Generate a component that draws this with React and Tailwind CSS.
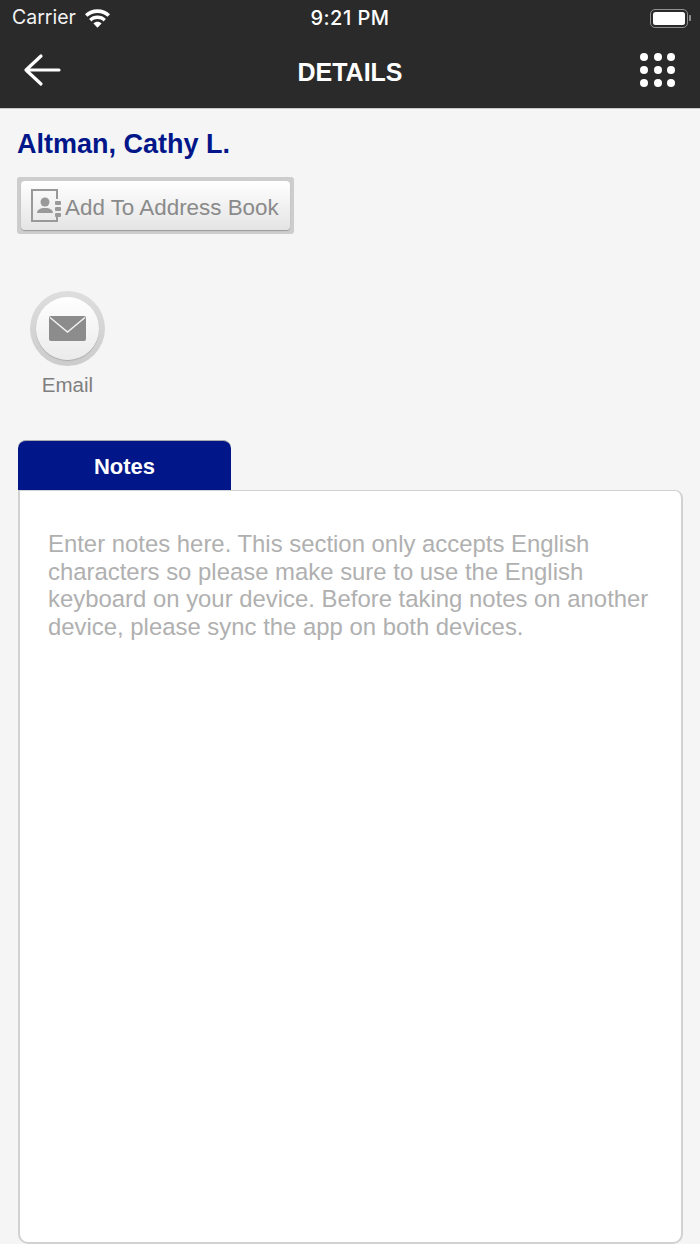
import React from "react";

function Wifi() {
  return (
    <svg width="25" height="19" viewBox="2.600 2.200 20.800 15.200" className="block" fill="#fff">
      <path d="M13 2.200c4 0 7.600 1.500 10.400 4.100l-2 2.100C19.200 6.400 16.200 5.200 13 5.200S6.800 6.400 4.600 8.400l-2-2.100C5.400 3.700 9 2.200 13 2.200z" />
      <path d="M13 7.400c2.700 0 5.100 1 7 2.800l-2 2.100c-1.300-1.300-3.100-2-5-2s-3.700.7-5 2l-2-2.100c1.900-1.800 4.300-2.800 7-2.800z" />
      <path d="M13 12.500c1.300 0 2.500.5 3.400 1.400L13 17.400l-3.400-3.500c.9-.9 2.100-1.400 3.400-1.400z" />
    </svg>
  );
}

function Battery() {
  return (
    <div className="flex items-center">
      <div className="w-[38px] h-[19px] rounded-[5px] border-[1.5px] border-[#8f8f8f] p-[2px]">
        <div className="w-full h-full rounded-[2.5px] bg-white" />
      </div>
      <div className="w-[2px] h-[6px] ml-[1px] rounded-r-[1px] bg-[#8f8f8f]" />
    </div>
  );
}

function Dots() {
  return (
    <div className="grid grid-cols-3 gap-x-[6px] gap-y-[5px] w-[35px]">
      {Array.from({ length: 9 }).map((_, i) => (
        <div key={i} className="w-[8px] h-[8px] rounded-full bg-white" />
      ))}
    </div>
  );
}

function BookIcon() {
  return (
    <svg width="31" height="33" viewBox="0 0 31 33" className="block shrink-0">
      <path d="M26 10V1H1v31h25v-4" fill="none" stroke="#999" strokeWidth="2" />
      <circle cx="14" cy="13" r="4.500" fill="#999" />
      <path d="M6 24c0-3 3-5 8-5s8 2 8 5z" fill="#999" />
      <rect x="24" y="12" width="6" height="4" rx="1" fill="#999" />
      <rect x="24" y="18" width="6" height="4" rx="1" fill="#999" />
      <rect x="24" y="24" width="6" height="4" rx="1" fill="#999" />
    </svg>
  );
}

export default function App() {
  return (
    <div className="w-[700px] h-[1244px] overflow-hidden flex flex-col bg-[#f5f5f5] font-['Liberation_Sans',sans-serif]">
      <header className="h-[109px] shrink-0 bg-[#2a2a2a] border-b border-[#c8c8c8] flex flex-col text-white">
        <div className="h-[36px] flex items-center justify-between pl-[12px] pr-[9px] relative">
          <div className="flex items-center gap-[9px]">
            <span className="text-[19.500px] leading-none text-[#f2f2f2] font-['Inter',sans-serif]">Carrier</span>
            <Wifi />
          </div>
          <span className="absolute left-0 right-0 text-center text-[20px] tracking-[0.500px] font-medium leading-none font-['Inter',sans-serif]">9:21 PM</span>
          <Battery />
        </div>
        <div className="flex-1 flex items-center justify-between pl-[23px] pr-[25px] relative pb-[4px]">
          <svg width="38" height="34" viewBox="0 0 38 34" className="block" fill="none" stroke="#fff" strokeWidth="3.200" strokeLinecap="round" strokeLinejoin="round">
            <path d="M36 17H3M18 3 3 17l15 14" />
          </svg>
          <span className="absolute left-0 right-0 top-[24px] text-center text-[25px] font-bold leading-none">DETAILS</span>
          <Dots />
        </div>
      </header>

      <main className="flex-1 flex flex-col pl-[17px] pr-[17px] min-h-0">
        <h1 className="mt-[19px] text-[27px] leading-[32px] font-bold text-[#001689]">Altman, Cathy L.</h1>

        <div className="mt-[17px] w-[277px] h-[57px] rounded-[3px] bg-[#cdcdcd] p-[4px]">
          <div className="h-full rounded-[4px] bg-gradient-to-b from-white to-[#e4e4e4] shadow-[0_1px_1px_#999] flex items-center pl-[10px] gap-[3px]">
            <BookIcon />
            <span className="text-[22.400px] text-[#8a8a8a] leading-none pt-[5px]">Add To Address Book</span>
          </div>
        </div>

        <div className="mt-[57px] ml-[13px] flex flex-col items-center w-[75px]">
          <div className="w-[75px] h-[75px] shrink-0 rounded-full bg-gradient-to-b from-[#dedede] to-[#cccccc] p-[6px]">
            <div className="w-full h-full rounded-full bg-gradient-to-b from-white to-[#ebebeb] shadow-[0_1px_1px_#aaa] flex items-center justify-center">
              <svg width="37" height="25" viewBox="0 0 37 25" className="block">
                <rect width="37" height="25" rx="2" fill="#8c8c8c" />
                <path d="M1 1.500 18.500 16 36 1.500" fill="none" stroke="#f2f2f2" strokeWidth="1.500" />
              </svg>
            </div>
          </div>
          <span className="mt-[7px] text-[20.500px] leading-[24px] text-[#7f7f7f]">Email</span>
        </div>

        <div className="mt-[43px] ml-[1px] flex-1 flex flex-col min-h-0">
          <div className="w-[213px] h-[50px] shrink-0 rounded-t-[8px] bg-[#001689] border-t border-[#aaa] flex items-center justify-center pt-[2px]">
            <span className="text-[22px] font-bold text-white leading-none">Notes</span>
          </div>
          <div className="flex-1 bg-white border-2 border-t border-[#d2d2d2] rounded-b-[10px] rounded-tr-[8px] pt-[39px] pl-[28px] pr-[20px]">
            <p className="text-[23.900px] leading-[27.500px] text-[#b0b0b0]">
              Enter notes here. This section only accepts English<br />
              characters so please make sure to use the English<br />
              keyboard on your device. Before taking notes on another<br />
              device, please sync the app on both devices.
            </p>
          </div>
        </div>
      </main>
    </div>
  );
}
